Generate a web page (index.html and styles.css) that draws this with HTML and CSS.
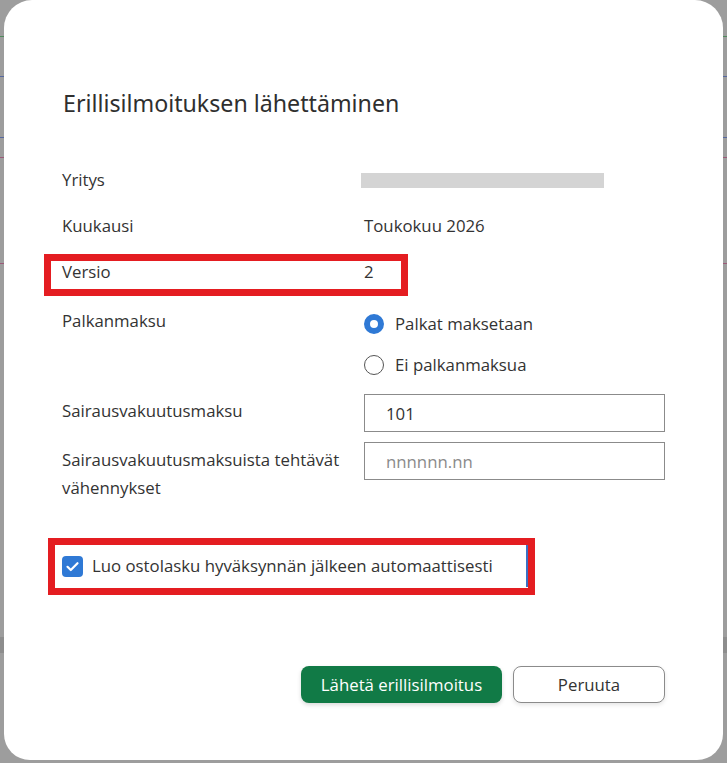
FILE: index.html
```html
<!DOCTYPE html>
<html lang="fi">
<head>
<meta charset="utf-8">
<title>Erillisilmoituksen lähettäminen</title>
<link rel="stylesheet" href="styles.css">
</head>
<body>
<div class="modal">
  <h1 class="title">Erillisilmoituksen lähettäminen</h1>
  <div class="form">
    <div class="row simple">
      <div class="label">Yritys</div>
      <div class="value"><span class="redacted"></span></div>
    </div>
    <div class="row simple">
      <div class="label">Kuukausi</div>
      <div class="value">Toukokuu 2026</div>
    </div>
    <div class="row simple marked">
      <div class="label">Versio</div>
      <div class="value">2</div>
      <span class="mark mark-version"></span>
    </div>
    <div class="row radio-row">
      <div class="label">Palkanmaksu</div>
      <div class="radio-group">
        <label class="option">
          <span class="radio checked"></span>
          <span>Palkat maksetaan</span>
        </label>
        <label class="option">
          <span class="radio"></span>
          <span>Ei palkanmaksua</span>
        </label>
      </div>
    </div>
    <div class="row input-row first">
      <div class="label">Sairausvakuutusmaksu</div>
      <input class="field" type="text" value="101">
    </div>
    <div class="row input-row second">
      <div class="label">Sairausvakuutusmaksuista tehtävät vähennykset</div>
      <input class="field" type="text" placeholder="nnnnnn.nn">
    </div>
  </div>
  <div class="check-row">
    <span class="checkbox">
      <svg viewBox="0 0 21 21" width="21" height="21" aria-hidden="true"><path d="M5.5 10.8l3.3 3.2 6.7-6.8" fill="none" stroke="#fff" stroke-width="2.2" stroke-linecap="round" stroke-linejoin="round"/></svg>
    </span>
    <span class="check-label">Luo ostolasku hyväksynnän jälkeen automaattisesti</span>
    <span class="focus-line"></span>
    <span class="mark mark-check"></span>
  </div>
  <div class="actions">
    <button class="btn primary" type="button">Lähetä erillisilmoitus</button>
    <button class="btn secondary" type="button">Peruuta</button>
  </div>
</div>
</body>
</html>
```
FILE: styles.css
```css
html, body {
  margin: 0;
  height: 100%;
  overflow: hidden;
}
body {
  padding: 0 4px 3px 4px;
  box-sizing: border-box;
  background-color: #9d9d9d;
  background-image:
    linear-gradient(#4f8a5c, #4f8a5c),
    linear-gradient(#56689f, #56689f),
    linear-gradient(#56689f, #56689f),
    linear-gradient(#9c5a78, #9c5a78),
    linear-gradient(#9c5a78, #9c5a78),
    linear-gradient(#8d8d8d, #8d8d8d);
  background-size: 100% 1px, 100% 1px, 100% 1px, 100% 1px, 100% 1px, 100% 16px;
  background-position: 0 36px, 0 76px, 0 137px, 0 157px, 0 263px, 0 637px;
  background-repeat: no-repeat;
  font-family: "Open Sans", "Noto Sans", "Liberation Sans", sans-serif;
  color: #333;
}
.modal {
  background: #fff;
  border-radius: 28px 28px 26px 26px;
  padding: 88px 58px 57px 58px;
}
.title {
  margin: 0 0 39px 1px;
  font-family: "Noto Sans", "Open Sans", sans-serif;
  font-weight: 400;
  font-size: 23.2px;
  line-height: 30px;
  color: #2f2f2f;
}
.form {
  display: flex;
  flex-direction: column;
}
.row {
  display: grid;
  grid-template-columns: 302px 301px;
  font-size: 16.8px;
}
.row.simple {
  height: 46px;
  align-items: center;
  line-height: 24px;
}
.marked {
  position: relative;
}
.mark {
  position: absolute;
  border: 7px solid #e41d21;
  box-sizing: border-box;
  pointer-events: none;
}
.mark-version {
  left: -18px;
  top: 5px;
  width: 364px;
  height: 42px;
}
.redacted {
  display: block;
  width: 243px;
  height: 15px;
  margin-left: -3px;
  background: #d4d4d4;
}
.radio-row {
  align-items: start;
  line-height: 24px;
  padding-top: 8px;
}
.radio-row .label {
  margin-top: 6px;
}
.radio-group {
  display: flex;
  flex-direction: column;
}
.option {
  height: 41px;
  display: flex;
  align-items: center;
  gap: 11px;
}
.radio {
  width: 20px;
  height: 20px;
  border-radius: 50%;
  box-sizing: border-box;
  border: 1.5px solid #555;
  background: #fff;
  flex: none;
}
.radio.checked {
  border: 6.5px solid #2f79d5;
  background: #fff;
}
.input-row {
  align-items: start;
  line-height: 28px;
}
.input-row.first {
  margin-top: 9px;
}
.input-row.second {
  margin-top: 10px;
}
.input-row.first .label {
  padding-top: 3px;
}
.input-row.second .label {
  padding-top: 4px;
}
.field {
  box-sizing: border-box;
  width: 301px;
  height: 38px;
  margin: 0;
  border: 1px solid #8b8b8b;
  border-radius: 0;
  padding: 0 10px 0 21px;
  font-family: inherit;
  font-size: 16.8px;
  color: #333;
  outline: none;
}
.field::placeholder {
  color: #8a8a8a;
}
.check-row {
  position: relative;
  margin-top: 49px;
  height: 30px;
  display: flex;
  align-items: center;
  gap: 9px;
}
.checkbox {
  width: 21px;
  height: 21px;
  border-radius: 4px;
  background: #2f79d5;
  display: flex;
  flex: none;
}
.check-label {
  font-size: 16.8px;
  line-height: 24px;
  color: #333;
}
.focus-line {
  position: absolute;
  left: 464px;
  top: -6px;
  width: 2px;
  height: 42px;
  background: #3b6fc4;
}
.mark-check {
  left: -14px;
  top: -13px;
  width: 487px;
  height: 57px;
}
.actions {
  margin-top: 85px;
  display: flex;
  justify-content: flex-end;
  gap: 11px;
}
.btn {
  height: 37px;
  border-radius: 8px;
  font-family: inherit;
  font-size: 16.8px;
  margin: 0;
  cursor: pointer;
}
.primary {
  width: 201px;
  background: #117a46;
  color: #fff;
  border: none;
  box-shadow: 0 2px 4px rgba(0, 0, 0, 0.15);
}
.secondary {
  width: 152px;
  background: #fff;
  color: #333;
  border: 1px solid #8b8b8b;
  box-shadow: 0 2px 4px rgba(0, 0, 0, 0.1);
}
```
